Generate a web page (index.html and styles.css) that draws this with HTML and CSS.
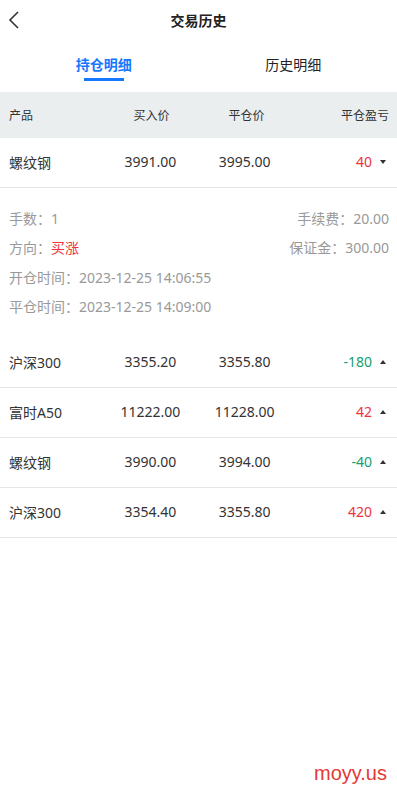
FILE: index.html
```html
<!DOCTYPE html>
<html lang="zh-CN">
<head>
    <meta charset="UTF-8">
    <meta name="viewport" content="width=device-width, initial-scale=1.0">
    <title>交易历史</title>
    <link rel="stylesheet" href="styles.css">
</head>
<body>
    <div class="nav-bar">
        <svg class="back-icon" width="20" height="20" viewBox="0 0 20 20">
            <polyline points="14,3 6,11 14,19" fill="none" stroke="#333" stroke-width="1.6"/>
        </svg>
        <div class="nav-title">交易历史</div>
    </div>

    <div class="tabs">
        <div class="tab active">持仓明细</div>
        <div class="tab">历史明细</div>
    </div>

    <div class="table-head">
        <div class="col-name">产品</div>
        <div class="col-mid">买入价</div>
        <div class="col-mid">平仓价</div>
        <div class="col-last">平仓盈亏</div>
    </div>

    <div class="row">
        <div class="col-name">螺纹钢</div>
        <div class="col-mid">3991.00</div>
        <div class="col-mid">3995.00</div>
        <div class="col-last"><span class="up">40</span><span class="caret down"></span></div>
    </div>
    <div class="detail">
        <div class="detail-line">
            <span>手数：1</span>
            <span>手续费：20.00</span>
        </div>
        <div class="detail-line">
            <span>方向：<span class="up">买涨</span></span>
            <span>保证金：300.00</span>
        </div>
        <div class="detail-line">
            <span>开仓时间：2023-12-25 14:06:55</span>
        </div>
        <div class="detail-line">
            <span>平仓时间：2023-12-25 14:09:00</span>
        </div>
    </div>

    <div class="row">
        <div class="col-name">沪深300</div>
        <div class="col-mid">3355.20</div>
        <div class="col-mid">3355.80</div>
        <div class="col-last"><span class="down-text">-180</span><span class="caret"></span></div>
    </div>
    <div class="row">
        <div class="col-name">富时A50</div>
        <div class="col-mid">11222.00</div>
        <div class="col-mid">11228.00</div>
        <div class="col-last"><span class="up">42</span><span class="caret"></span></div>
    </div>
    <div class="row">
        <div class="col-name">螺纹钢</div>
        <div class="col-mid">3990.00</div>
        <div class="col-mid">3994.00</div>
        <div class="col-last"><span class="down-text">-40</span><span class="caret"></span></div>
    </div>
    <div class="row">
        <div class="col-name">沪深300</div>
        <div class="col-mid">3354.40</div>
        <div class="col-mid">3355.80</div>
        <div class="col-last"><span class="up">420</span><span class="caret"></span></div>
    </div>

    <div class="watermark">moyy.us</div>
</body>
</html>
```

FILE: styles.css
```css
body {
    font-family: "Noto Sans", "Noto Sans CJK SC", sans-serif;
    margin: 0;
    background-color: #fff;
    color: #333;
    width: 397px;
    height: 788px;
    position: relative;
}
.nav-bar {
    height: 40px;
    display: flex;
    align-items: center;
    justify-content: center;
    position: relative;
}
.back-icon {
    position: absolute;
    left: 4px;
    top: 9px;
}
.nav-title {
    font-size: 14px;
    font-weight: bold;
    color: #222;
}
.tabs {
    display: flex;
    height: 52px;
    padding: 0 9px;
}
.tab {
    flex: 1;
    display: flex;
    justify-content: center;
    align-items: center;
    font-size: 14px;
    color: #222;
    position: relative;
    padding-bottom: 4px;
    box-sizing: border-box;
}
.tab.active {
    color: #1677ff;
    font-weight: bold;
}
.tab.active::after {
    content: "";
    position: absolute;
    width: 40px;
    height: 3px;
    background-color: #1677ff;
    left: 50%;
    margin-left: -20px;
    top: 38px;
}
.table-head {
    display: grid;
    grid-template-columns: repeat(4, 1fr);
    align-items: center;
    height: 46px;
    padding: 0 8px 0 9px;
    background-color: #ebeeef;
    font-size: 12px;
    color: #333;
}
.row {
    display: grid;
    grid-template-columns: repeat(4, 1fr);
    align-items: center;
    height: 47px;
    padding: 0 11px 2px 9px;
    border-bottom: 1px solid #e5e5e5;
    font-size: 14px;
    color: #333;
}
.col-name {
    text-align: left;
}
.col-mid {
    text-align: center;
}
.col-last {
    text-align: right;
    display: flex;
    justify-content: flex-end;
    align-items: center;
}
.up {
    color: #f0323c;
}
.down-text {
    color: #14a06e;
}
.caret {
    width: 0;
    height: 0;
    margin-left: 8px;
    border-left: 3.5px solid transparent;
    border-right: 3.5px solid transparent;
    border-bottom: 4px solid #333;
}
.caret.down {
    border-bottom: none;
    border-top: 4px solid #333;
}
.detail {
    padding: 15px 8px 17px 9px;
    font-size: 14px;
    color: #999;
}
.detail-line {
    display: flex;
    justify-content: space-between;
    height: 29.5px;
    align-items: center;
}
.watermark {
    position: absolute;
    right: 10px;
    top: 762px;
    font-family: "Liberation Sans", Arial, sans-serif;
    font-size: 20px;
    color: #e53935;
}
```
